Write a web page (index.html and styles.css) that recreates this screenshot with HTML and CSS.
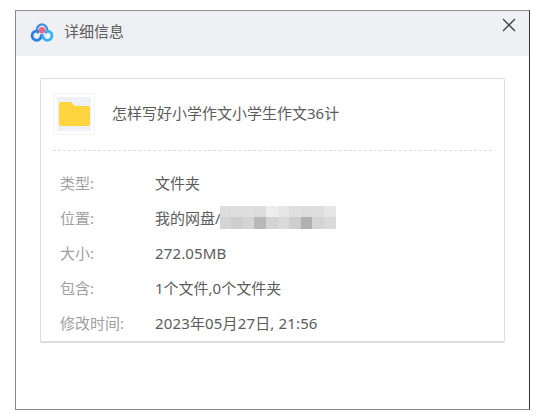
FILE: index.html
```html
<!DOCTYPE html>
<html lang="zh-CN">
<head>
<meta charset="utf-8">
<title>详细信息</title>
<link rel="stylesheet" href="styles.css">
</head>
<body>
<div class="dialog">
  <header class="head">
    <svg class="logo" viewBox="0 0 24 20" aria-hidden="true">
      <path class="ring-top" d="M8 10.5 A5 5 0 1 1 16 10.5" />
      <circle class="dot" cx="12" cy="8.2" r="3.2" />
      <path class="ring-left" d="M11.2 13.5 A4.6 4.6 0 1 1 7.6 9.2" />
      <path class="ring-right" d="M12.8 13.5 A4.6 4.6 0 1 0 16.4 9.2" />
    </svg>
    <span class="head-title">详细信息</span>
    <svg class="close" viewBox="0 0 14 14" aria-hidden="true">
      <path d="M1 1 L13 13 M13 1 L1 13" />
    </svg>
  </header>
  <section class="card">
    <div class="file">
      <div class="tile">
        <svg class="folder" viewBox="0 0 31 24" aria-hidden="true">
          <path d="M2 0 H12 L16 4 H29 Q31 4 31 6 V22 Q31 24 29 24 H2 Q0 24 0 22 V2 Q0 0 2 0 Z" />
        </svg>
      </div>
      <div class="file-name">怎样写好小学作文小学生作文36计</div>
    </div>
    <dl class="rows">
      <div class="row"><dt>类型:</dt><dd>文件夹</dd></div>
      <div class="row"><dt>位置:</dt><dd class="path">我的网盘/<span class="mosaic"><i class="s1"></i><i class="s2"></i><i class="s2"></i><i class="s1"></i><i class="s4"></i><i class="s3"></i><i class="s2"></i><i class="s1"></i><i class="s2"></i><i class="s3"></i><i class="b2"></i><i class="b1"></i><i class="b2"></i><i class="b4"></i><i class="b2"></i><i class="b3"></i><i class="b1"></i><i class="b5"></i><i class="b2"></i><i class="b3"></i></span></dd></div>
      <div class="row"><dt>大小:</dt><dd class="num">272.05MB</dd></div>
      <div class="row"><dt>包含:</dt><dd>1个文件,0个文件夹</dd></div>
      <div class="row"><dt>修改时间:</dt><dd class="num">2023年05月27日, 21:56</dd></div>
    </dl>
  </section>
</div>
</body>
</html>
```

FILE: styles.css
```css
* { box-sizing: border-box; }
html, body { margin: 0; height: 100%; background: #fff; }
body {
  padding: 10px 9px 8px 15px;
  font-family: "Noto Sans", "Noto Sans CJK SC", sans-serif;
  font-size: 15px;
  color: #5c5c5c;
}
.dialog {
  height: 400px;
  background: #fff;
  border: 1px solid #8a8a8a;
  border-top-color: #909090;
  border-right-color: #333;
}
.head {
  height: 45px;
  background: #eef0f4;
  display: flex;
  align-items: center;
  padding: 0 13px 6px 14px;
}
.logo { width: 24px; height: 20px; flex: none; margin-top: 3px; }
.logo path { fill: none; stroke-linecap: round; }
.ring-top { stroke: #3f8fe8 !important; stroke-width: 2.4; }
.dot { fill: #f0647f; }
.ring-left { stroke: #2b7fe6; stroke-width: 2.8; }
.ring-right { stroke: #37b4ef; stroke-width: 2.8; }
.head-title { margin-left: 10px; }
.close { width: 14px; height: 14px; margin: -12px 0 0 auto; flex: none; }
.close path { fill: none; stroke: #444; stroke-width: 1.4; }
.card {
  height: 265px;
  margin: 22px 24px 0 24px;
  padding: 14px 12px 0 12px;
  border: 1px solid #ddd;
  border-bottom: 2px solid #ddd;
  border-radius: 2px;
}
.file {
  display: flex;
  align-items: center;
  height: 58px;
  padding-bottom: 15px;
  border-bottom: 1px dashed #ddd;
}
.tile {
  width: 42px;
  height: 42px;
  flex: none;
  display: flex;
  align-items: center;
  justify-content: center;
  padding: 3px;
  background: #eef1f5;
  background-clip: content-box;
  border: 1px solid #f3f3f3;
  border-radius: 2px;
}
.folder { width: 31px; height: 24px; }
.folder path { fill: #ffd43f; }
.file-name { margin-left: 17px; margin-top: -4px; white-space: nowrap; }
.rows { margin: 14px 0 0; }
.row { display: flex; height: 35px; align-items: center; margin: 0; }
.row dt { width: 102px; padding-left: 7px; color: #a0a0a0; flex: none; }
.row dd { margin: 0; white-space: nowrap; }
.row dd.num { letter-spacing: 0.15px; }
.path { display: flex; align-items: center; }
.mosaic {
  display: grid;
  grid-template-columns: repeat(10, 11.6px);
  grid-template-rows: 11px 12px;
  margin-left: -1px;
}
.mosaic i { display: block; }
.s1 { background: #dcdcdc; }
.s2 { background: #dfdfdf; }
.s3 { background: #e6e6e6; }
.s4 { background: #ecedf0; }
.b1 { background: #cecece; }
.b2 { background: #d4d4d4; }
.b3 { background: #dadada; }
.b4 { background: #b9b8b5; }
.b5 { background: #b0b0b0; }
```
